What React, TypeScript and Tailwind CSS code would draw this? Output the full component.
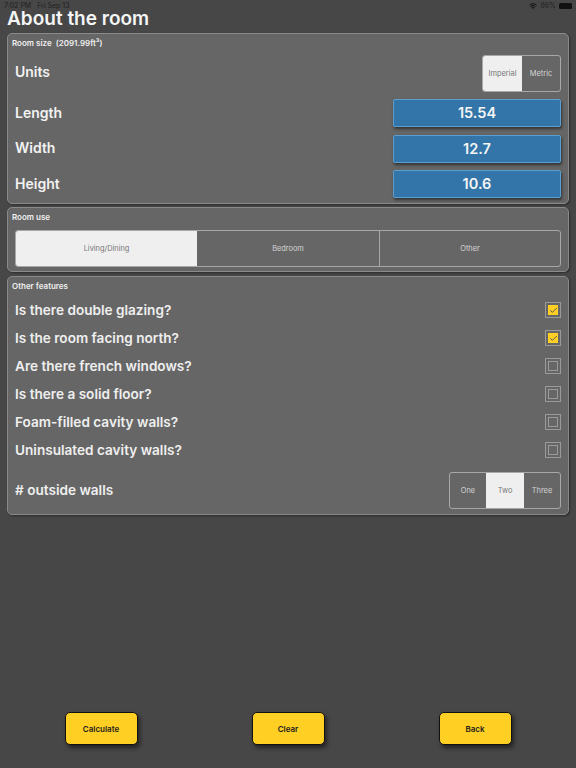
import { Check, Wifi } from 'lucide-react'

const sizes = [
  { label: 'Length', value: '15.54' },
  { label: 'Width', value: '12.7' },
  { label: 'Height', value: '10.6' },
]

const features = [
  { label: 'Is there double glazing?', checked: true },
  { label: 'Is the room facing north?', checked: true },
  { label: 'Are there french windows?', checked: false },
  { label: 'Is there a solid floor?', checked: false },
  { label: 'Foam-filled cavity walls?', checked: false },
  { label: 'Uninsulated cavity walls?', checked: false },
]

function Segments({ items, active, className }: { items: { label: string; width: string }[]; active: number; className: string }) {
  return (
    <div className={`flex overflow-hidden rounded-[3px] border border-[#a8a8a8] ${className}`}>
      {items.map((item, i) => (
        <div
          key={item.label}
          className={`flex h-full items-center justify-center text-[7.4px] ${item.width} ${i === active ? 'bg-[#efefef] text-[#777777]' : 'text-[#d4d4d4]'} ${i > 0 && i !== active && i - 1 !== active ? 'border-l border-[#a8a8a8]' : ''}`}
        >
          {item.label}
        </div>
      ))}
    </div>
  )
}

function Tick({ checked }: { checked: boolean }) {
  return (
    <div className="flex h-4 w-4 items-center justify-center border border-[#9a9a9a]">
      <div className={`flex h-[10px] w-[10px] items-center justify-center border ${checked ? 'border-[#ffcf24] bg-[#ffcf24]' : 'border-[#9a9a9a]'}`}>
        {checked && <Check className="h-[9px] w-[9px] shrink-0 text-[#555555]" strokeWidth={2.5} />}
      </div>
    </div>
  )
}

function ActionButton({ label }: { label: string }) {
  return (
    <button className="h-[33px] w-[73px] rounded-[5px] border border-[#111111] bg-[#ffcf24] text-[8px] font-semibold text-[#1c1c1c] shadow-[2px_3px_4px_rgba(0,0,0,0.5)]">
      {label}
    </button>
  )
}

export default function App() {
  return (
    <div className="flex h-[768px] w-[576px] flex-col overflow-hidden bg-[#474747] px-[7px] font-['Inter',sans-serif] text-white">
      {/* Status bar */}
      <div className="-mx-[7px] flex h-[11px] items-center justify-between pl-[4px] pr-[4px] text-[7px] leading-none text-[#1f1f1f]">
        <div className="flex gap-[6px]">
          <span>7:02 PM</span>
          <span>Fri Sep 13</span>
        </div>
        <div className="flex items-center gap-[3px]">
          <Wifi className="h-[8px] w-[8px] text-[#111111]" strokeWidth={3} />
          <span>86%</span>
          <div className="h-[6px] w-[13px] rounded-[1.5px] bg-[#111111]" />
        </div>
      </div>

      <h1 className="h-[22px] text-[19px] leading-[15px] font-semibold text-[#f5f5f5]">About the room</h1>

      {/* Room size */}
      <section className="h-[171px] w-[562px] rounded-[5px] border border-[#8a8a8a] bg-[#666666] pt-[4px] pl-[4px] pr-[7px] shadow-[1px_1px_2px_rgba(0,0,0,0.4)]">
        <div className="text-[8px] leading-[10px] font-semibold text-[#efefef]">Room size&nbsp; (2091.99ft³)</div>
        <div className="mt-[7px] flex h-[37px] items-center justify-between pl-[3px]">
          <span className="-mt-[4px] text-[14px] font-semibold text-[#f2f2f2]">Units</span>
          <Segments
            className="h-[37px]"
            active={0}
            items={[
              { label: 'Imperial', width: 'w-[39px]' },
              { label: 'Metric', width: 'w-[38px]' },
            ]}
          />
        </div>
        <div className="mt-[7px] flex flex-col gap-[7.5px]">
          {sizes.map((row) => (
            <div key={row.label} className="flex h-[28px] items-center justify-between pl-[3px]">
              <span className="-mt-[2px] text-[14px] font-semibold text-[#f2f2f2]">{row.label}</span>
              <div className="flex h-[28px] w-[168px] items-center justify-center rounded-[2px] border border-[#5a9fd0] bg-[#3375a8] text-[14.5px] font-semibold text-[#f5f5f5] shadow-[1px_2px_3px_rgba(0,0,0,0.5)]">
                {row.value}
              </div>
            </div>
          ))}
        </div>
      </section>

      {/* Room use */}
      <section className="mt-[3px] h-[65px] w-[562px] rounded-[5px] border border-[#8a8a8a] bg-[#666666] pt-[4px] pl-[4px] pr-[7px] shadow-[1px_1px_2px_rgba(0,0,0,0.4)]">
        <div className="text-[8px] leading-[10px] font-semibold text-[#efefef]">Room use</div>
        <div className="mt-[8px] pl-[3px]">
          <Segments
            className="h-[37px] w-[546px]"
            active={0}
            items={[
              { label: 'Living/Dining', width: 'w-[181px]' },
              { label: 'Bedroom', width: 'w-[182px]' },
              { label: 'Other', width: 'flex-1' },
            ]}
          />
        </div>
      </section>

      {/* Other features */}
      <section className="mt-[4px] h-[239px] w-[562px] rounded-[5px] border border-[#8a8a8a] bg-[#666666] pt-[4px] pl-[4px] pr-[7px] shadow-[1px_1px_2px_rgba(0,0,0,0.4)]">
        <div className="text-[8px] leading-[10px] font-semibold text-[#efefef]">Other features</div>
        <div className="mt-[5px] flex flex-col">
          {features.map((row) => (
            <div key={row.label} className="flex h-[28px] items-center justify-between pl-[3px]">
              <span className="text-[13.6px] font-semibold text-[#efefef]">{row.label}</span>
              <Tick checked={row.checked} />
            </div>
          ))}
        </div>
        <div className="mt-[8px] flex h-[37px] items-center justify-between pl-[3px]">
          <span className="-mt-[1px] text-[13.6px] font-semibold text-[#efefef]"># outside walls</span>
          <Segments
            className="h-[37px]"
            active={1}
            items={[
              { label: 'One', width: 'w-[36px]' },
              { label: 'Two', width: 'w-[38px]' },
              { label: 'Three', width: 'w-[36px]' },
            ]}
          />
        </div>
      </section>

      {/* Actions */}
      <div className="mt-auto mb-[23px] flex justify-between pl-[57.5px] pr-[57.5px]">
        <ActionButton label="Calculate" />
        <ActionButton label="Clear" />
        <ActionButton label="Back" />
      </div>
    </div>
  )
}
